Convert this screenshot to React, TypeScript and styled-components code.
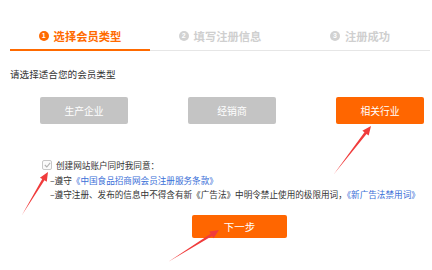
import React from "react";
import styled, { createGlobalStyle } from "styled-components";

const Global = createGlobalStyle`
  html, body { margin: 0; padding: 0; background: #fff; }
  body { font-family: "Noto Sans CJK SC", "Noto Sans", sans-serif; color: #333; }
`;

const Page = styled.div`
  position: relative;
  width: 432px;
  height: 270px;
  overflow: hidden;
  background: #fff;
`;

const Steps = styled.div`
  display: flex;
  margin: 23px 2px 0 10px;
  border-bottom: 1px solid #e6e6e6;
`;

const Step = styled.div<{ $active?: boolean }>`
  flex: 1;
  height: 26px;
  display: flex;
  align-items: center;
  justify-content: center;
  gap: 5px;
  margin-bottom: -1px;
  border-bottom: 2px solid ${(p) => (p.$active ? "#ff6a00" : "transparent")};
  color: ${(p) => (p.$active ? "#ff6a00" : "#cfcfcf")};
  font-size: 11.3px;
  font-weight: bold;
`;

const Dot = styled.span<{ $active?: boolean }>`
  width: 10px;
  height: 10px;
  border-radius: 50%;
  background: ${(p) => (p.$active ? "#ff6a00" : "#d2d2d2")};
  color: #fff;
  font-size: 7px;
  line-height: 10px;
  text-align: center;
  font-family: "Liberation Sans", sans-serif;
`;

const Prompt = styled.div`
  margin: 16px 0 0 10px;
  font-size: 9.6px;
  line-height: 14px;
  color: #333;
`;

const TypeRow = styled.div`
  display: flex;
  gap: 60px;
  margin: 16px 0 0 40px;
`;

const TypeButton = styled.div<{ $active?: boolean }>`
  width: 88px;
  height: 27px;
  border-radius: 2px;
  background: ${(p) => (p.$active ? "#ff6600" : "#c4c4c4")};
  color: #fff;
  font-size: 9.8px;
  display: flex;
  align-items: center;
  justify-content: center;
`;

const Agreement = styled.div`
  margin: 34px 0 0 42px;
  font-size: 8.6px;
  line-height: 14.5px;
  color: #333;
`;

const CheckLine = styled.div`
  display: flex;
  align-items: center;
  gap: 4px;
`;

const Box = styled.span`
  width: 8px;
  height: 8px;
  border: 1px solid #c8c8c8;
  border-radius: 2px;
  display: flex;
  align-items: center;
  justify-content: center;
  background: #fafafa;
`;

const Rule = styled.div`
  padding-left: 8px;
  white-space: nowrap;
`;

const Link = styled.span`
  color: #3a6fd8;
`;

const NextButton = styled.div`
  margin: 13px 0 0 192px;
  width: 95px;
  height: 23px;
  border-radius: 2px;
  background: #ff6600;
  color: #fff;
  font-size: 10.5px;
  display: flex;
  align-items: center;
  justify-content: center;
`;

const Overlay = styled.svg`
  position: absolute;
  left: 0;
  top: 0;
  pointer-events: none;
`;

function Arrow({ x1, y1, x2, y2 }: { x1: number; y1: number; x2: number; y2: number }) {
  const dx = x2 - x1;
  const dy = y2 - y1;
  const len = Math.hypot(dx, dy);
  const ux = dx / len;
  const uy = dy / len;
  const px = -uy;
  const py = ux;
  const headLen = 9;
  const headW = 4;
  const shaftW = 1.3;
  const bx = x2 - ux * headLen;
  const by = y2 - uy * headLen;
  const pts = [
    [x1, y1],
    [bx + px * shaftW, by + py * shaftW],
    [bx + px * headW, by + py * headW],
    [x2, y2],
    [bx - px * headW, by - py * headW],
    [bx - px * shaftW, by - py * shaftW],
  ]
    .map((p) => p.join(","))
    .join(" ");
  return <polygon points={pts} fill="#f03c3c" />;
}

export default function App() {
  return (
    <Page>
      <Global />
      <Steps>
        <Step $active>
          <Dot $active>1</Dot>选择会员类型
        </Step>
        <Step>
          <Dot>2</Dot>填写注册信息
        </Step>
        <Step>
          <Dot>3</Dot>注册成功
        </Step>
      </Steps>
      <Prompt>请选择适合您的会员类型</Prompt>
      <TypeRow>
        <TypeButton>生产企业</TypeButton>
        <TypeButton>经销商</TypeButton>
        <TypeButton $active>相关行业</TypeButton>
      </TypeRow>
      <Agreement>
        <CheckLine>
          <Box>
            <svg width="7" height="6" viewBox="0 0 7 6">
              <path d="M0.8 3 L2.8 5 L6.2 0.8" fill="none" stroke="#b0b0b0" strokeWidth="1.1" />
            </svg>
          </Box>
          创建网站账户同时我同意：
        </CheckLine>
        <Rule>
          –遵守<Link>《中国食品招商网会员注册服务条款》</Link>
        </Rule>
        <Rule>
          –遵守注册、发布的信息中不得含有新《广告法》中明令禁止使用的极限用词，<Link>《新广告法禁用词》</Link>
        </Rule>
      </Agreement>
      <NextButton>下一步</NextButton>
      <Overlay width="432" height="270">
        <Arrow x1={334} y1={174} x2={371} y2={126} />
        <Arrow x1={22} y1={215} x2={48} y2={172} />
        <Arrow x1={168} y1={262} x2={219} y2={230} />
      </Overlay>
    </Page>
  );
}
